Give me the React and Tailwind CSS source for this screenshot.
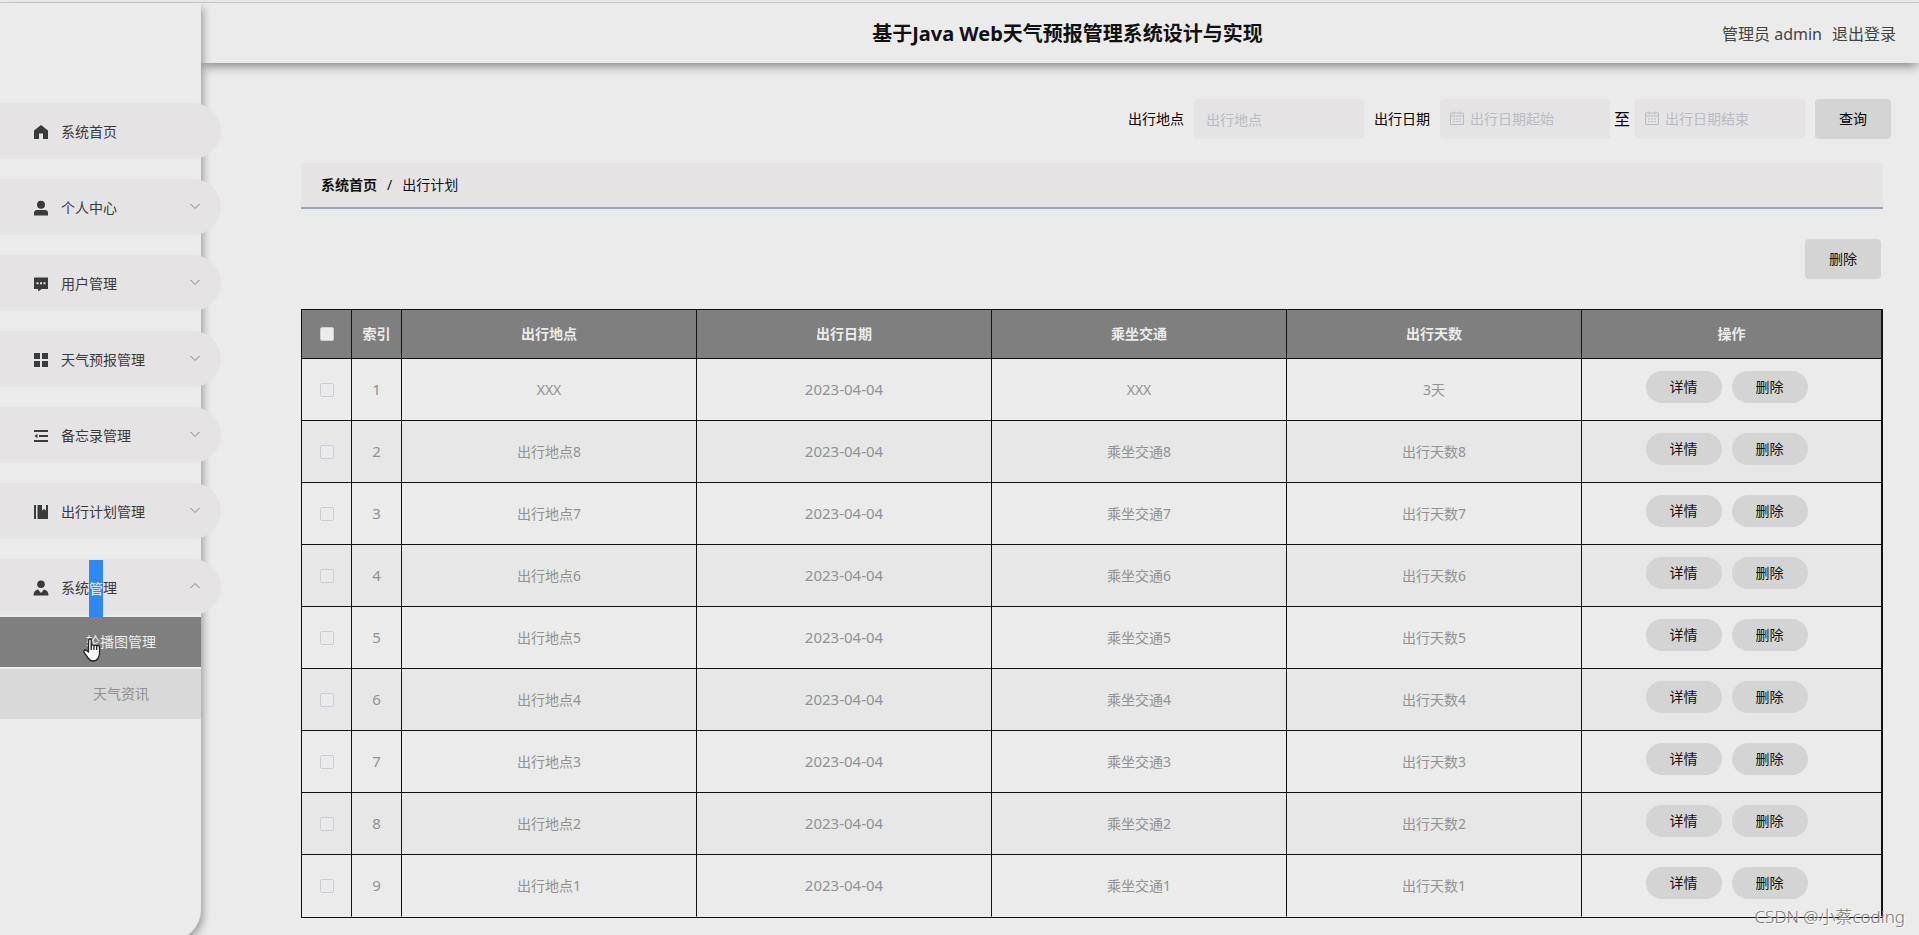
import { useState } from "react"
import clsx from "clsx"

const menuItems = [
  { icon: 'home', label: '系统首页' },
  { icon: 'user', label: '个人中心', sub: true },
  { icon: 'comment', label: '用户管理', sub: true },
  { icon: 'grid', label: '天气预报管理', sub: true },
  { icon: 'fold', label: '备忘录管理', sub: true },
  { icon: 'book', label: '出行计划管理', sub: true },
];

const columns = ['出行地点', '出行日期', '乘坐交通', '出行天数'];

const plans = [
  { place: 'XXX', date: '2023-04-04', traffic: 'XXX', days: '3天' },
  ...[8, 7, 6, 5, 4, 3, 2, 1].map((n) => ({
    place: `出行地点${n}`,
    date: '2023-04-04',
    traffic: `乘坐交通${n}`,
    days: `出行天数${n}`,
  })),
];

const iconShapes = {
  home: <path d="M8 1 1 6.6V15h5V9.500h4V15h5V6.600z" />,
  user: <><circle cx="8" cy="4.700" r="4" /><path d="M1 15.500v-2.500Q1 10 4 10h8q3 0 3 3v2.500z" /></>,
  comment: <path fillRule="evenodd" d="M1 1.500h14V13H8.500L5.500 15.500 5 13H1zM3.500 6.300v2h2v-2zM7 6.300v2h2v-2zM10.500 6.300v2h2v-2z" />,
  grid: <path d="M1 1h6v6H1zM9 1h6v6H9zM1 9h6v6H1zM9 9h6v6H9z" />,
  fold: <path d="M1 2h14v2H1zM6 7h9v2H6zM1 12h14v2H1zM1.500 8 4.500 5.700v4.600z" />,
  book: <path d="M1 1h2v14H1zM4.500 1H9v5.500l2-1.500 2 1.500V1h2v14H4.500z" />,
  custom: <><circle cx="8" cy="4.300" r="3.800" /><path d="M.5 15.500Q.5 10.500 5 9.500l3 3.500 3-3.500q4.500 1 4.500 6z" /></>,
};

const MenuIcon = ({ name }) => (
  <svg viewBox="0 0 16 16" className="w-4 h-4 ml-[33px] mr-3 shrink-0" fill="currentColor">
    {iconShapes[name]}
  </svg>
);

const Chevron = ({ up }) => (
  <svg viewBox="0 0 12 12" className={clsx('w-3 h-3 ml-auto mr-5 mb-1 shrink-0', up && 'rotate-180')} fill="none" stroke="#808388">
    <path d="M1.500 4 6 8.500 10.500 4" />
  </svg>
);

const CalendarIcon = () => (
  <svg viewBox="0 0 14 14" className="w-[14px] h-[14px] mb-[2px] shrink-0" fill="none" stroke="#b9bcc4">
    <path d="M.5 2h13v11.500H.5zM.5 5h13M4 .5v3M10 .5v3M3 8h2M6 8h2M9 8h2M3 10.500h2M6 10.500h2M9 10.500h2" />
  </svg>
);

const DateField = ({ placeholder, value, onChange }) => (
  <div className="flex items-center w-[170px] h-10 pl-[10px] rounded bg-[#e5e3e4]">
    <CalendarIcon />
    <input
      type="text"
      aria-label={placeholder}
      placeholder={placeholder}
      className="w-full min-w-0 pl-[6px] bg-transparent outline-none placeholder:text-[#b9bcc4]"
      value={value}
      onChange={(e) => onChange(e.target.value)}
    />
  </div>
);

const HandCursor = () => (
  <svg viewBox="0 0 18 24" className="absolute left-[83px] top-[21px] w-[18px] h-6" fill="#fff" stroke="#222" strokeWidth="1.300" strokeLinejoin="round">
    <path d="M5.500 14V2.500Q5.500 1 6.800 1 8.200 1 8.200 2.500V8q0-1.200 1.300-1.200T11 8.200q0-1 1.300-1t1.400 1.300q0-1 1.300-1t1.500 1.500V15q0 3-1.500 5.200Q13.500 23 10 23 7.300 23 5.500 20.500L1.200 14.700Q.3 13 1.500 12.200 2.700 11.600 4 12.700z" />
    <path d="M8.200 8v4M11 8.500V12M13.700 9v3" fill="none" />
  </svg>
);

const Sidebar = () => (
  <aside className="relative z-20 w-[201px] shrink-0 -mb-[5px] pt-[100px] bg-[#ebebeb] rounded-br-[30px] shadow-[3px_4px_8px_-1px_rgba(0,0,0,0.35)]">
    <nav className="text-[#3a3a3d]">
      <ul>
        {menuItems.map((item) => (
          <li key={item.label} className="mb-5">
            <button type="button" className="flex items-center w-[221px] h-14 pt-[2px] rounded-r-full bg-[#e5e3e4]">
              <MenuIcon name={item.icon} />
              {item.label}
              {item.sub && <Chevron />}
            </button>
          </li>
        ))}
        <li>
          <button type="button" className="flex items-center w-[221px] h-14 pt-[2px] rounded-r-full bg-[#e5e3e4]">
            <MenuIcon name="custom" />
            <span>系统</span>
            <span className="h-[57px] leading-[57px] bg-[#2f87f0] text-[#e8f2ff]">管</span>
            <span>理</span>
            <Chevron up />
          </button>
          <ul className="mt-[2px] text-center leading-[50px]">
            <li className="relative mb-[2px]">
              <a href="#carousel" className="block pl-[41px] bg-[#7f7f7f] text-[#ebebeb]">轮播图管理</a>
              <HandCursor />
            </li>
            <li>
              <a href="#news" className="block pl-[41px] bg-[#d9d9d9] text-[#909090]">天气资讯</a>
            </li>
          </ul>
        </li>
      </ul>
    </nav>
  </aside>
);

const Header = () => (
  <header className="relative z-10 flex items-center h-[60px] pt-[2px] pl-[212px] pr-[23px] shrink-0 shadow-[0_5px_10px_-2px_rgba(0,0,0,0.45)] bg-[#ebebeb]">
    <h1 className="flex-1 text-center text-xl font-bold text-[#111]">基于Java Web天气预报管理系统设计与实现</h1>
    <div className="flex gap-[10px] text-base text-[#444]">
      <span>管理员 admin</span>
      <a href="#logout">退出登录</a>
    </div>
  </header>
);

const SearchBar = () => {
  const [place, setPlace] = useState('');
  const [start, setStart] = useState('');
  const [end, setEnd] = useState('');

  return (
    <form className="flex items-center justify-end pr-7 text-black" onSubmit={(e) => e.preventDefault()}>
      <label htmlFor="place" className="mr-[10px]">出行地点</label>
      <input
        type="text"
        id="place"
        name="place"
        placeholder="出行地点"
        className="w-[170px] h-10 px-3 mr-[10px] rounded bg-[#e5e3e4] outline-none placeholder:text-[#b9bcc4]"
        value={place}
        onChange={(e) => setPlace(e.target.value)}
      />
      <span className="mr-[10px]">出行日期</span>
      <DateField placeholder="出行日期起始" value={start} onChange={setStart} />
      <span className="ml-1 mr-[5px] text-base">至</span>
      <DateField placeholder="出行日期结束" value={end} onChange={setEnd} />
      <button type="submit" className="w-[76px] h-10 ml-[10px] rounded bg-[#d4d4d4]">查询</button>
    </form>
  );
};

const checkboxClass = "block w-[14px] h-[14px] mx-auto appearance-none rounded-xs border border-[#cdcdd6] bg-[#ebebee]";

const PlanTable = () => (
  <table className="w-full table-fixed border-separate border-spacing-0 border-l border-y border-[#111] text-center text-[#929292]">
    <colgroup>
      <col className="w-[50px]" />
      <col className="w-[50px]" />
      {columns.map((name) => <col key={name} />)}
      <col className="w-[301px]" />
    </colgroup>
    <thead className="bg-[#7f7f7f] text-[#ebebeb]">
      <tr className="h-[49px]">
        <th className="border-r border-b border-[#111]">
          <input type="checkbox" aria-label="全选" className={checkboxClass} />
        </th>
        <th className="border-r border-b border-[#111]">索引</th>
        {columns.map((name) => <th key={name} className="border-r border-b border-[#111]">{name}</th>)}
        <th className="border-r-2 border-b border-[#111]">操作</th>
      </tr>
    </thead>
    <tbody>
      {plans.map((plan, i) => (
        <tr key={plan.place} className="h-[62px] even:bg-[#e7e7e7] last:*:border-b-transparent">
          <td className="border-r border-b border-[#111]">
            <input type="checkbox" aria-label={plan.place} className={checkboxClass} />
          </td>
          <td className="border-r border-b border-[#111] text-[15px]">{i + 1}</td>
          <td className="border-r border-b border-[#111]">{plan.place}</td>
          <td className="border-r border-b border-[#111] text-[15px]">{plan.date}</td>
          <td className="border-r border-b border-[#111]">{plan.traffic}</td>
          <td className="border-r border-b border-[#111]">{plan.days}</td>
          <td className="border-r-2 border-b border-[#111]">
            <div className="flex justify-center gap-[10px] pr-[10px] pb-[5px] text-[#111]">
              <button type="button" className="w-[76px] h-8 rounded-full bg-[#d4d4d4]">详情</button>
              <button type="button" className="w-[76px] h-8 rounded-full bg-[#d4d4d4]">删除</button>
            </div>
          </td>
        </tr>
      ))}
    </tbody>
  </table>
);

export default function App() {
  return (
    <div className="relative flex flex-col h-screen overflow-hidden bg-[#ebebeb] text-sm font-['Noto_Sans','Noto_Sans_CJK_SC',sans-serif]">
      <div className="h-[3px] shrink-0 border-b border-[#ccc]"></div>
      <div className="flex flex-1 min-h-0">
        <Sidebar />
        <div className="flex flex-col flex-1 min-w-0">
          <Header />
          <main className="flex-1 min-h-0 overflow-y-auto pt-9">
            <SearchBar />
            <div className="ml-[100px] mr-9">
              <nav className="flex items-center h-[46px] mt-6 px-5 gap-[10px] border-b-2 border-[#98a4c2] bg-[#e5e3e4] text-[#111]">
                <a href="#home" className="font-bold">系统首页</a>
                <span>/</span>
                <span>出行计划</span>
              </nav>
              <div className="flex justify-end my-[30px] pr-[2px]">
                <button type="button" className="w-[76px] h-10 rounded bg-[#d4d4d4] text-[#111]">删除</button>
              </div>
              <PlanTable />
            </div>
          </main>
        </div>
      </div>
      <div className="absolute right-[14px] bottom-[6px] z-30 text-[17px] leading-6 font-light text-[#777] [text-shadow:1px_1px_1px_#fff]">CSDN @小蔡coding</div>
    </div>
  )
}
